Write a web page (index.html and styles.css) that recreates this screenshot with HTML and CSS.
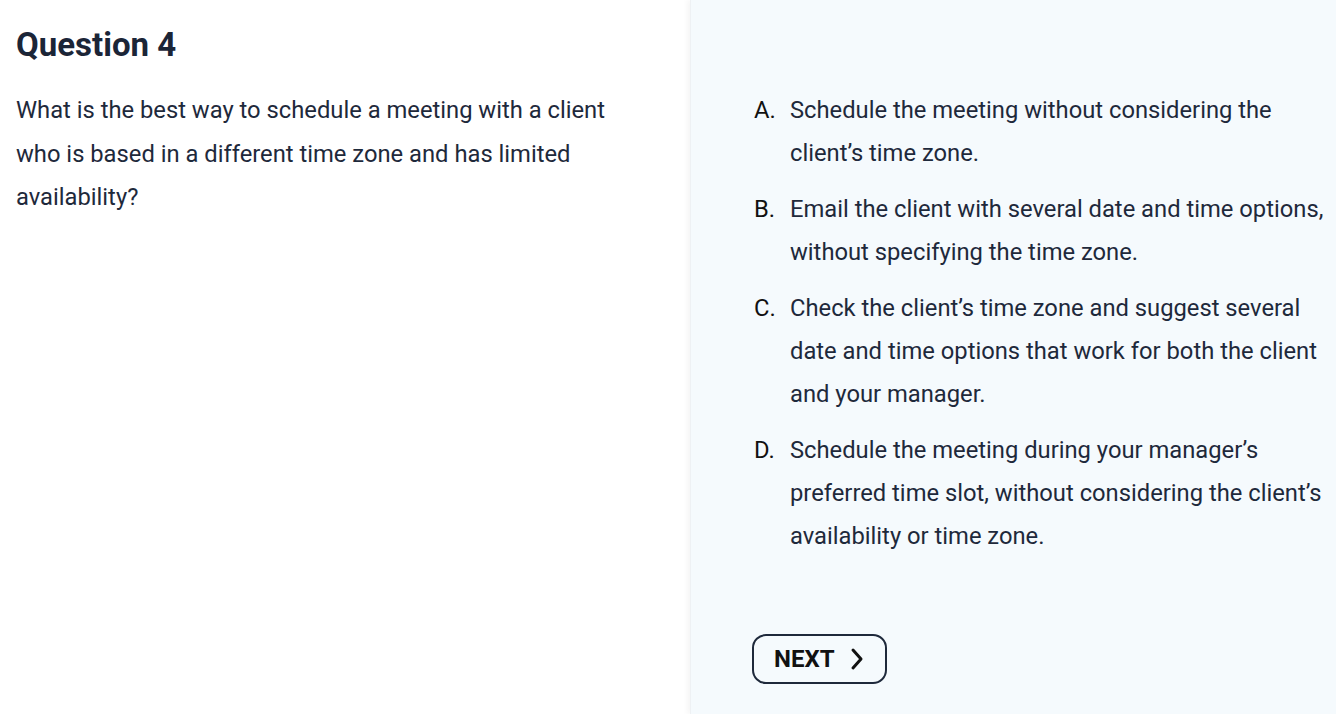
FILE: index.html
```html
<!DOCTYPE html>
<html lang="en">
<head>
  <meta charset="UTF-8">
  <meta name="viewport" content="width=device-width, initial-scale=1.0">
  <title>Question 4</title>
  <link rel="stylesheet" href="styles.css">
</head>
<body>
  <main class="quiz">
    <section class="question">
      <h2>Question 4</h2>
      <p>What is the best way to schedule a meeting with a client who is based in a different time zone and has limited availability?</p>
    </section>

    <section class="answers">
      <ol class="options">
        <li>Schedule the meeting without considering the client’s time zone.</li>
        <li>Email the client with several date and time options, without specifying the time zone.</li>
        <li>Check the client’s time zone and suggest several date and time options that work for both the client and your manager.</li>
        <li>Schedule the meeting during your manager’s preferred time slot, without considering the client’s availability or time zone.</li>
      </ol>

      <button class="next-btn">
        NEXT
        <svg width="16" height="24" viewBox="0 0 16 24" fill="none" stroke="#111" stroke-width="3" stroke-linecap="round" stroke-linejoin="round">
          <path d="M4 3 L12 12 L4 21"/>
        </svg>
      </button>
    </section>
  </main>
</body>
</html>
```

FILE: styles.css
```css
* {
  box-sizing: border-box;
}

body {
  margin: 0;
  padding: 0;
  font-family: Roboto, "Liberation Sans", sans-serif;
  color: #1e293b;
  background: #ffffff;
}

.quiz {
  display: grid;
  grid-template-columns: 690px 1fr;
  min-height: 714px;
}

.question {
  padding: 25px 16px 0 16px;
}

.question h2 {
  margin: 0 0 24px 0;
  font-size: 33px;
  line-height: 40px;
  font-weight: 700;
  color: #1b2537;
}

.question p {
  margin: 0;
  font-size: 23.75px;
  line-height: 43.5px;
  max-width: 615px;
}

.answers {
  background: #f5fafd;
  box-shadow: -3px 0 5px rgba(0, 0, 0, 0.04);
  border-left: 1px solid #eef1f4;
  padding: 89px 8px 0 63px;
}

.options {
  list-style: none;
  counter-reset: option;
  margin: 0;
  padding: 0;
  font-size: 23.75px;
  line-height: 43px;
}

.options li {
  counter-increment: option;
  display: grid;
  grid-template-columns: 36px 1fr;
  margin-bottom: 13px;
}

.options li::before {
  content: counter(option, upper-alpha) ".";
  color: #111;
}

.next-btn {
  display: flex;
  align-items: center;
  gap: 14px;
  margin-top: 76px;
  margin-left: -2px;
  height: 50px;
  padding: 0 20px 0 20px;
  background: transparent;
  border: 2px solid #1e293b;
  border-radius: 14px;
  font-family: Roboto, "Liberation Sans", sans-serif;
  font-size: 24px;
  font-weight: 700;
  color: #111;
  cursor: pointer;
}
```
